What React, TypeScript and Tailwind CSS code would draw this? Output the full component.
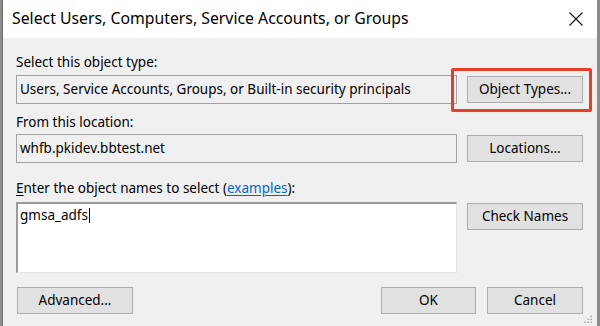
import React from "react";

const font = { fontFamily: '"Noto Sans", "Liberation Sans", sans-serif' };

const Btn = ({ label, w, className = "" }: { label: string; w: string; className?: string }) => (
  <button
    className={`h-[27px] ${w} bg-[#e1e1e1] border border-[#adadad] text-[13.5px] text-black leading-none flex items-center justify-center ${className}`}
  >
    {label}
  </button>
);

export default function App() {
  return (
    <div className="w-[600px] h-[326px] bg-[#8c8c8c] pl-[2px] pr-[3px] flex overflow-hidden" style={font}>
      <div className="flex-1 border-l border-[#6e6e6e] bg-[#f0f0f0] flex flex-col relative">
        {/* Title bar */}
        <div className="h-[38px] bg-white flex items-center pl-[9px] pr-[11px] shrink-0">
          <span className="text-[15.8px] text-black flex-1">
            Select Users, Computers, Service Accounts, or Groups
          </span>
          <svg width="14" height="14" viewBox="0 0 14 14" className="mr-[3px]">
            <path d="M0.5 0.5 L13.5 13.5 M13.5 0.5 L0.5 13.5" stroke="#111" strokeWidth="1.1" fill="none" />
          </svg>
        </div>

        {/* Body */}
        <div className="flex flex-col pl-[13px] pt-[16px] text-[13.5px] text-black">
          <div className="h-[16px] leading-[16px]">Select this object type:</div>
          <div className="flex items-center mt-[5px]">
            <div className="h-[29px] w-[441px] border border-[#a0a0a0] bg-[#f0f0f0] flex items-center pl-[3px] leading-none">
              Users, Service Accounts, Groups, or Built-in security principals
            </div>
            <div className="relative ml-[10px]">
              <Btn label="Object Types..." w="w-[116px]" />
              <span className="absolute -left-[16px] -right-[9px] -top-[8px] -bottom-[9px] border-[3px] border-[#e63e2b] rounded-[2px] pointer-events-none" />
            </div>
          </div>

          <div className="h-[16px] leading-[16px] mt-[10px]">From this location:</div>
          <div className="flex items-center mt-[4px]">
            <div className="h-[29px] w-[441px] border border-[#a0a0a0] bg-[#f0f0f0] flex items-center pl-[3px] leading-none">
              whfb.pkidev.bbtest.net
            </div>
            <Btn label="Locations..." w="w-[116px]" className="ml-[10px]" />
          </div>

          <div className="h-[16px] leading-[16px] mt-[17px]">
            <span className="underline underline-offset-2">E</span>nter the object names to select (
            <span className="text-[#0066cc] underline underline-offset-2">examples</span>):
          </div>
          <div className="flex items-start mt-[6px]">
            <div className="h-[71px] w-[441px] bg-white border-t-2 border-l-2 border-[#9a9a9a] border-r border-b border-r-[#e3e3e3] border-b-[#e3e3e3] pl-[2px] pt-[3px] leading-[16px] flex items-start">
              <span>gmsa_adfs</span>
              <span className="w-px h-[15px] bg-black ml-px mt-px" />
            </div>
            <Btn label="Check Names" w="w-[116px]" className="ml-[10px] mt-px" />
          </div>

          <div className="flex items-center mt-[14px] pr-[14px]">
            <Btn label="Advanced..." w="w-[116px]" className="ml-px h-[26px]" />
            <div className="flex-1" />
            <Btn label="OK" w="w-[95px]" className="h-[26px]" />
            <Btn label="Cancel" w="w-[96px]" className="ml-[11px] h-[26px]" />
          </div>
        </div>

        {/* Resize grip */}
        <svg width="10" height="10" viewBox="0 0 10 10" className="absolute right-[4px] bottom-[2px]">
          {[
            [8, 2],
            [8, 5],
            [5, 5],
            [8, 8],
            [5, 8],
            [2, 8],
          ].map(([x, y], i) => (
            <rect key={i} x={x - 0.5} y={y - 0.5} width="1.5" height="1.5" fill="#a8a8a8" />
          ))}
        </svg>
      </div>
    </div>
  );
}
